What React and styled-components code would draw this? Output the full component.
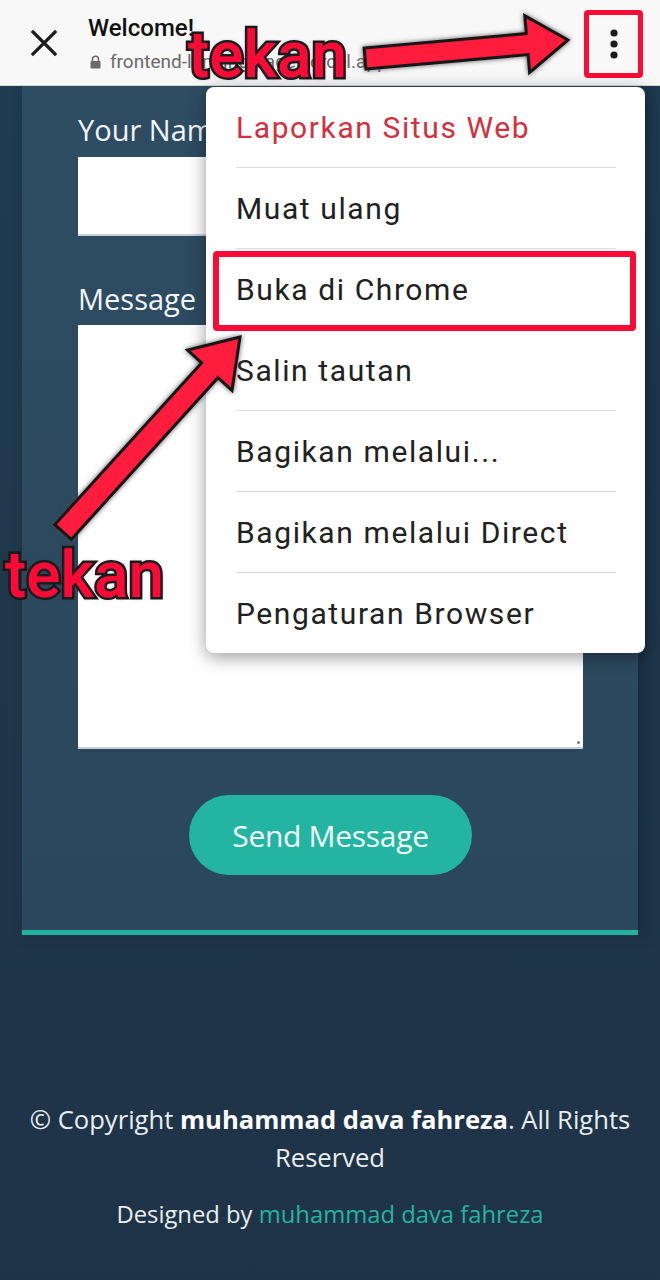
import React from 'react'
import styled, { createGlobalStyle } from 'styled-components'

const GlobalStyle = createGlobalStyle`
  html, body {
    margin: 0;
    padding: 0;
  }
  body {
    width: 660px;
    height: 1280px;
    overflow: hidden;
    background: #1f3549;
    font-family: 'Open Sans', 'Noto Sans', sans-serif;
  }
`

const menuItems = [
  { label: 'Laporkan Situs Web', danger: true },
  { label: 'Muat ulang' },
  { label: 'Buka di Chrome', marked: true },
  { label: 'Salin tautan' },
  { label: 'Bagikan melalui...' },
  { label: 'Bagikan melalui Direct' },
  { label: 'Pengaturan Browser' },
]

function Arrows() {
  return (
    <ArrowLayer width="660" height="1280" viewBox="0 0 660 1280">
      <defs>
        <filter id="glow" x="-20%" y="-20%" width="140%" height="140%">
          <feDropShadow dx="0" dy="0" stdDeviation="2.5" floodColor="#444" floodOpacity="0.9" />
        </filter>
      </defs>
      <g filter="url(#glow)" fill="#ff1a3d" stroke="#161616" strokeWidth="3" strokeLinejoin="miter">
        <polygon points="365.9,69 528.1,54.6 529.6,72.5 568,40 524.8,15.7 526.3,33.6 364.1,48" />
        <polygon points="71.2,539.4 218,377.7 232,390.5 240,337 187.6,350.1 201.6,362.9 54.8,524.6" />
      </g>
    </ArrowLayer>
  )
}

export default function App() {
  return (
    <Screen>
      <GlobalStyle />
      <TopBar>
        <svg width="28" height="28" viewBox="0 0 28 28">
          <path d="M3 3 L25 25 M25 3 L3 25" stroke="#1c1c1c" strokeWidth="3.2" strokeLinecap="square" />
        </svg>
        <TitleBlock>
          <PageTitle>Welcome!</PageTitle>
          <UrlLine>
            <svg width="11" height="14" viewBox="0 0 11 14">
              <path d="M2.5 6 V4.2 a3 3 0 0 1 6 0 V6" fill="none" stroke="#6b6b6b" strokeWidth="1.6" />
              <rect x="0.5" y="6" width="10" height="7.5" rx="1" fill="#6b6b6b" />
            </svg>
            frontend-landing-page.vercel.app
          </UrlLine>
        </TitleBlock>
        <KebabBox>
          <svg width="10" height="30" viewBox="0 0 10 30">
            <circle cx="5" cy="4" r="3.6" fill="#1c1c1c" />
            <circle cx="5" cy="15" r="3.6" fill="#1c1c1c" />
            <circle cx="5" cy="26" r="3.6" fill="#1c1c1c" />
          </svg>
        </KebabBox>
      </TopBar>

      <Page>
        <Card>
          <Label>Your Name</Label>
          <Input />
          <Label $gap={45}>Message</Label>
          <TextArea>
            <Grip />
          </TextArea>
          <ButtonRow>
            <SendButton>Send Message</SendButton>
          </ButtonRow>
        </Card>
        <Footer>
          <Copy>
            © Copyright <strong>muhammad dava fahreza</strong>. All Rights Reserved
          </Copy>
          <Credits>
            Designed by <span>muhammad dava fahreza</span>
          </Credits>
        </Footer>
      </Page>

      <Menu>
        {menuItems.map((item, i) => (
          <React.Fragment key={item.label}>
            {i > 0 && <Divider />}
            <MenuItem $danger={item.danger}>
              {item.label}
              {item.marked && <Mark />}
            </MenuItem>
          </React.Fragment>
        ))}
      </Menu>

      <Arrows />
      <Tekan $top={24} $left={188}>tekan</Tekan>
      <Tekan $top={544} $left={5}>tekan</Tekan>
    </Screen>
  )
}

const Screen = styled.div`
  position: relative;
  width: 660px;
  height: 1280px;
  overflow: hidden;
  background: linear-gradient(180deg, #1f3c51 0%, #1f3549 70%, #1f3347 100%);
`

const TopBar = styled.header`
  position: relative;
  z-index: 2;
  height: 86px;
  box-sizing: border-box;
  display: flex;
  align-items: center;
  padding: 0 17px 0 30px;
  background: #f8f8f8;
  border-bottom: 1px solid #d8d8d8;
`

const TitleBlock = styled.div`
  display: flex;
  flex-direction: column;
  margin-left: 30px;
  gap: 8px;
  margin-top: 2px;
`

const PageTitle = styled.div`
  font-family: Roboto, sans-serif;
  font-weight: 500;
  font-size: 24px;
  line-height: 28px;
  color: #111;
`

const UrlLine = styled.div`
  display: flex;
  align-items: center;
  gap: 9px;
  font-family: Roboto, sans-serif;
  font-size: 19px;
  line-height: 24px;
  color: #6a6a6a;
  padding-left: 2px;
`

const KebabBox = styled.div`
  margin-left: auto;
  width: 59px;
  height: 68px;
  box-sizing: border-box;
  border: 5px solid #ff0a36;
  border-radius: 4px;
  display: flex;
  align-items: center;
  justify-content: center;
  margin-top: 3px;
`

const Page = styled.main`
  padding: 0 22px;
`

const Card = styled.section`
  background: linear-gradient(180deg, #2e4c62 0%, #2b475c 100%);
  padding: 26px 55px 55px 56px;
  border-bottom: 5px solid #22b3a0;
  box-shadow: 6px 0 14px rgba(10, 25, 40, 0.35);
`

const Label = styled.div`
  font-size: 29px;
  line-height: 36px;
  color: #f2f5f7;
  margin-top: ${(p) => p.$gap || 0}px;
`

const Input = styled.div`
  height: 79px;
  margin-top: 9px;
  background: #fff;
  box-sizing: border-box;
  border-bottom: 2px solid #c9d0d6;
`

const TextArea = styled.div`
  position: relative;
  height: 424px;
  margin-top: 8px;
  background: #fff;
  box-sizing: border-box;
  border-bottom: 2px solid #c9d0d6;
`

const Grip = styled.span`
  position: absolute;
  right: 3px;
  bottom: 3px;
  width: 3px;
  height: 3px;
  border-radius: 50%;
  background: #777;
`

const ButtonRow = styled.div`
  display: flex;
  justify-content: center;
  margin-top: 46px;
`

const SendButton = styled.button`
  width: 283px;
  height: 80px;
  border: none;
  border-radius: 40px;
  background: #23b5a1;
  color: #f4fffd;
  font-family: 'Open Sans', sans-serif;
  font-size: 30px;
  letter-spacing: -0.3px;
`

const Footer = styled.footer`
  padding-top: 166px;
  margin: 0 -20px;
  text-align: center;
  color: #e9eef2;
`

const Copy = styled.p`
  margin: 0;
  font-size: 25.6px;
  line-height: 38px;

  strong {
    font-weight: 700;
    color: #fff;
  }
`

const Credits = styled.p`
  margin: 21px 0 0;
  font-size: 23.8px;
  line-height: 32px;

  span {
    color: #25b4a0;
  }
`

const Menu = styled.nav`
  position: absolute;
  z-index: 3;
  top: 87px;
  left: 206px;
  width: 439px;
  background: #fff;
  border-radius: 8px;
  box-shadow: 0 4px 18px rgba(0, 0, 0, 0.4);
  overflow: hidden;
`

const MenuItem = styled.div`
  position: relative;
  height: 80px;
  display: flex;
  align-items: center;
  padding-left: 30px;
  font-family: Roboto, sans-serif;
  font-size: 30px;
  letter-spacing: 1.6px;
  color: ${(p) => (p.$danger ? '#d3303f' : '#212121')};
`

const Divider = styled.div`
  height: 1px;
  margin: 0 29px 0 30px;
  background: #dcdcdc;
`

const Mark = styled.span`
  position: absolute;
  top: 2px;
  bottom: -2px;
  left: 7px;
  right: 9px;
  border: 6px solid #ff0a36;
  border-radius: 4px;
`

const ArrowLayer = styled.svg`
  position: absolute;
  z-index: 5;
  top: 0;
  left: 0;
  pointer-events: none;
`

const Tekan = styled.div`
  position: absolute;
  z-index: 6;
  top: ${(p) => p.$top}px;
  left: ${(p) => p.$left}px;
  font-family: Roboto, sans-serif;
  font-weight: 500;
  font-size: 64px;
  line-height: 1;
  color: #ff0a36;
  -webkit-text-stroke: 5px #141414;
  paint-order: stroke fill;
  text-shadow: 0 0 4px rgba(60, 60, 60, 0.8);
`
